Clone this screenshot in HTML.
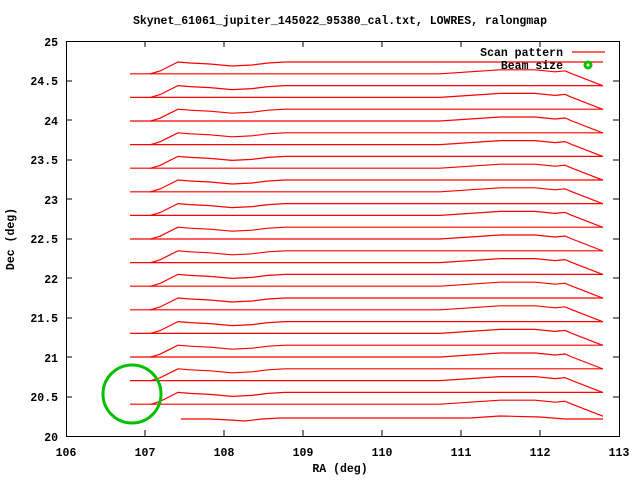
<!DOCTYPE html>
<html><head><meta charset="utf-8"><style>
html,body{margin:0;padding:0;background:#fff;}
svg{display:block;}
text{font-family:"Liberation Mono",monospace;font-weight:bold;font-size:11.5px;fill:#000;}
</style></head><body>
<svg width="640" height="480" viewBox="0 0 640 480" xmlns="http://www.w3.org/2000/svg">
<defs>
<path id="W" d="M150,12 L160,9 L170,4 L178,0 L190,1 L210,2 L232,4 L252,3 L268,1 L285,0 L603,0" fill="none" stroke="#f00" stroke-width="1.2"/>
<path id="R" d="M130,0 L440,0 L470,-2 L500,-4 L535,-4 L555,-2 L565,-3 L572,0 L603,12" fill="none" stroke="#f00" stroke-width="1.2"/>
</defs>
<text x="340" y="24" text-anchor="middle">Skynet_61061_jupiter_145022_95380_cal.txt, LOWRES, ralongmap</text>
<g stroke="#000" stroke-width="1" fill="none">
<rect x="66.5" y="41.5" width="553" height="395"/>
<path d="M66,81h6M66,120h6M66,160h6M66,199h6M66,239h6M66,278h6M66,318h6M66,357h6M66,397h6
M619,81h-6M619,120h-6M619,160h-6M619,199h-6M619,239h-6M619,278h-6M619,318h-6M619,357h-6M619,397h-6
M145,436v-6M224,436v-6M303,436v-6M382,436v-6M461,436v-6M540,436v-6
M145,41v6M224,41v6M303,41v6M382,41v6M461,41v6M540,41v6"/>
</g>
<g text-anchor="end">
<text x="58" y="46">25</text><text x="58" y="85">24.5</text><text x="58" y="125">24</text>
<text x="58" y="164">23.5</text><text x="58" y="204">23</text><text x="58" y="243">22.5</text>
<text x="58" y="283">22</text><text x="58" y="322">21.5</text><text x="58" y="362">21</text>
<text x="58" y="401">20.5</text><text x="58" y="441">20</text>
</g>
<g text-anchor="middle">
<text x="66" y="456">106</text><text x="145" y="456">107</text><text x="224" y="456">108</text>
<text x="303" y="456">109</text><text x="382" y="456">110</text><text x="461" y="456">111</text>
<text x="540" y="456">112</text><text x="619" y="456">113</text>
<text x="340" y="472">RA (deg)</text>
<text x="0" y="0" transform="translate(14,239) rotate(-90)">Dec (deg)</text>
</g>
<g>
<use href="#W" y="62"/><use href="#R" y="73.8"/>
<use href="#W" y="85.6"/><use href="#R" y="97.4"/>
<use href="#W" y="109.2"/><use href="#R" y="121"/>
<use href="#W" y="132.8"/><use href="#R" y="144.6"/>
<use href="#W" y="156.4"/><use href="#R" y="168.2"/>
<use href="#W" y="180"/><use href="#R" y="191.8"/>
<use href="#W" y="203.6"/><use href="#R" y="215.4"/>
<use href="#W" y="227.2"/><use href="#R" y="239"/>
<use href="#W" y="250.8"/><use href="#R" y="262.6"/>
<use href="#W" y="274.4"/><use href="#R" y="286.2"/>
<use href="#W" y="298"/><use href="#R" y="309.8"/>
<use href="#W" y="321.6"/><use href="#R" y="333.4"/>
<use href="#W" y="345.2"/><use href="#R" y="357"/>
<use href="#W" y="368.8"/><use href="#R" y="380.6"/>
<use href="#W" y="392.4"/><use href="#R" y="404.2"/>
<path d="M181,419 L210,419 L230,420 L245,421 L262,419 L280,418 L470,418 L500,416 L540,417 L565,419 L603,419" fill="none" stroke="#f00" stroke-width="1.2"/>
</g>
<circle cx="132" cy="394" r="29" fill="none" stroke="#00c000" stroke-width="3"/>
<text x="563" y="56" text-anchor="end">Scan pattern</text>
<line x1="572" y1="52" x2="605" y2="52" stroke="#f00" stroke-width="1.2"/>
<text x="563" y="69" text-anchor="end">Beam size</text>
<circle cx="588" cy="65" r="3" fill="none" stroke="#00c000" stroke-width="3"/>
</svg>
</body></html>
